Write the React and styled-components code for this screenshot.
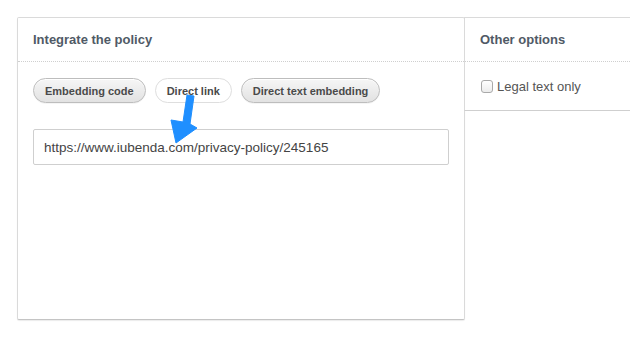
import React from "react";
import styled, { createGlobalStyle } from "styled-components";

const GlobalStyle = createGlobalStyle`
  html, body {
    margin: 0;
    padding: 0;
    background: #ffffff;
    font-family: "Liberation Sans", Arial, Helvetica, sans-serif;
  }
`;

const Page = styled.div`
  position: relative;
  width: 630px;
  height: 337px;
  overflow: hidden;
  padding: 17px 0 0 17px;
  box-sizing: border-box;
  display: flex;
  align-items: flex-start;
`;

const MainPanel = styled.div`
  width: 448px;
  height: 303px;
  box-sizing: border-box;
  border: 1px solid #dadada;
  border-bottom-color: #c4c4c4;
  border-radius: 2px;
  box-shadow: 0 1px 1px rgba(0, 0, 0, 0.08);
  background: #fff;
  flex-shrink: 0;
`;

const SidePanel = styled.div`
  flex: 1;
  min-width: 200px;
  box-sizing: border-box;
  border-top: 1px solid #dadada;
  border-bottom: 1px solid #cfcfcf;
  margin-left: -1px;
  border-left: 1px solid #dadada;
  background: #fff;
`;

const PanelHead = styled.div`
  height: 43px;
  display: flex;
  align-items: center;
  padding-left: ${(p) => p.$pad}px;
  border-bottom: 1px dotted #cfcfcf;
  font-size: 13px;
  font-weight: bold;
  color: #505a66;
`;

const PanelBody = styled.div`
  padding: 16px 15px 0 15px;
`;

const Tabs = styled.div`
  display: flex;
  gap: 9px;
`;

const Tab = styled.button`
  height: 25px;
  padding: 0 11px;
  border-radius: 13px;
  font-family: "Liberation Sans", Arial, Helvetica, sans-serif;
  font-size: 11px;
  font-weight: bold;
  color: #4a4a4a;
  cursor: pointer;
  border: 1px solid ${(p) => (p.$active ? "#dedede" : "#bdbdbd")};
  background: ${(p) =>
    p.$active ? "#ffffff" : "linear-gradient(#f6f6f6, #e2e2e2)"};
  box-shadow: ${(p) =>
    p.$active ? "none" : "inset 0 1px 0 #fff, 0 1px 0 rgba(0,0,0,0.04)"};
`;

const LinkField = styled.div`
  margin-top: 26px;
  height: 36px;
  box-sizing: border-box;
  border: 1px solid #cfcfcf;
  border-radius: 2px;
  display: flex;
  align-items: center;
  padding-left: 10px;
  font-size: 13.5px;
  color: #444;
`;

const OptionRow = styled.label`
  height: 48px;
  display: flex;
  align-items: center;
  padding-left: 16px;
  font-size: 13px;
  color: #555;
  gap: 4px;
`;

const Box = styled.span`
  width: 10px;
  height: 11px;
  border: 1px solid #a9a9a9;
  border-radius: 3px;
  background: linear-gradient(#ffffff, #ececec);
  display: inline-block;
`;

const Arrow = styled.svg`
  position: absolute;
  left: 165px;
  top: 92px;
  width: 35px;
  height: 55px;
  pointer-events: none;
`;

export default function App() {
  return (
    <>
      <GlobalStyle />
      <Page>
        <MainPanel>
          <PanelHead $pad={15}>Integrate the policy</PanelHead>
          <PanelBody>
            <Tabs>
              <Tab>Embedding code</Tab>
              <Tab $active>Direct link</Tab>
              <Tab>Direct text embedding</Tab>
            </Tabs>
            <LinkField>https://www.iubenda.com/privacy-policy/245165</LinkField>
          </PanelBody>
        </MainPanel>
        <SidePanel>
          <PanelHead $pad={15}>Other options</PanelHead>
          <OptionRow>
            <Box />
            Legal text only
          </OptionRow>
        </SidePanel>
        <Arrow viewBox="0 0 35 55">
          <polygon
            points="22,3 29,4 25,32 32,36 11,51 6,28 18,30"
            fill="#1f8fff"
            strokeLinejoin="round"
            stroke="#1f8fff"
            strokeWidth="1"
          />
        </Arrow>
      </Page>
    </>
  );
}
